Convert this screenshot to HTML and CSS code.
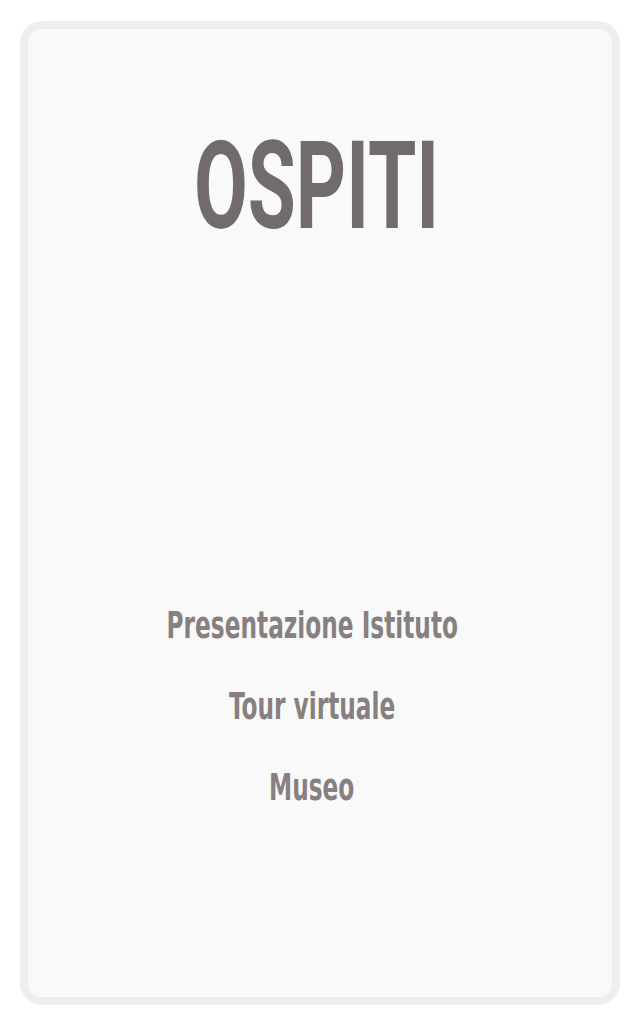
FILE: index.html
```html
<!DOCTYPE html>
<html lang="it">
<head>
<meta charset="utf-8">
<title>Ospiti</title>
<link rel="stylesheet" href="styles.css">
</head>
<body>
<div class="page">
  <div class="card">
    <h1 class="title"><span class="cond">OSPITI</span></h1>
    <nav class="menu">
      <a class="item" href="#"><span class="cond-s">Presentazione Istituto</span></a>
      <a class="item" href="#"><span class="cond-s">Tour virtuale</span></a>
      <a class="item" href="#"><span class="cond-s">Museo</span></a>
    </nav>
  </div>
</div>
</body>
</html>
```

FILE: styles.css
```css
html, body {
  margin: 0;
  padding: 0;
  background: #ffffff;
}
.page {
  padding: 21px 20px 19px 20px;
}
.card {
  box-sizing: border-box;
  height: 984px;
  border: 8px solid #eeeeee;
  border-radius: 22px;
  background: #f9f9f9;
  display: flex;
  flex-direction: column;
  align-items: center;
  font-family: "DejaVu Sans Condensed", "DejaVu Sans", sans-serif;
}
.title {
  margin: 88px 6px 0 0;
  font-family: Roboto, "DejaVu Sans", sans-serif;
  font-size: 122px;
  font-weight: 700;
  line-height: 140px;
  color: #716b6b;
  text-align: center;
}
.cond {
  display: inline-block;
  transform: scaleX(0.64);
}
.menu {
  margin-top: 328px;
  padding-right: 16px;
  display: flex;
  flex-direction: column;
  align-items: center;
}
.item {
  display: block;
  font-size: 38px;
  font-weight: bold;
  line-height: 81px;
  color: #868080;
  text-decoration: none;
}
.cond-s {
  display: inline-block;
  transform: scaleX(0.68);
}
```
